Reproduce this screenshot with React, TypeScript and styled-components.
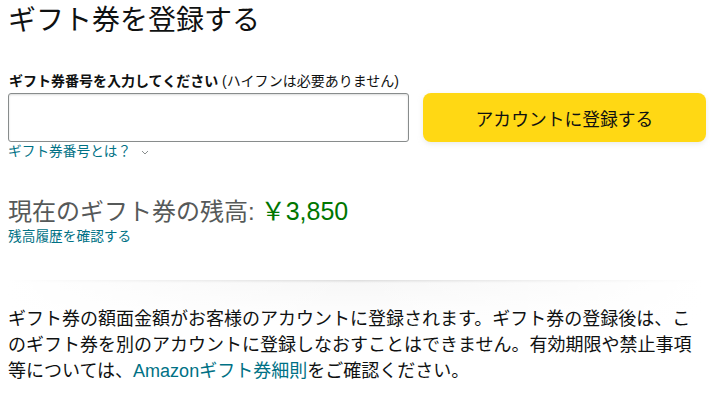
import React from "react";
import styled, { createGlobalStyle } from "styled-components";

const GlobalStyle = createGlobalStyle`
  html, body {
    margin: 0;
    padding: 0;
    background: #fff;
  }
  body {
    font-family: "Liberation Sans", "Noto Sans CJK JP", sans-serif;
    color: #0f1111;
  }
`;

const Page = styled.div`
  width: 710px;
  height: 395px;
  overflow: hidden;
  padding: 3px 8px 0;
  box-sizing: border-box;
`;

const Title = styled.h1`
  margin: 0;
  font-size: 28px;
  font-weight: 400;
  line-height: 36px;
  color: #0f1111;
`;

const Form = styled.div`
  margin-top: 32px;
`;

const Label = styled.label`
  display: block;
  font-size: 14px;
  line-height: 20px;
  margin-bottom: 2px;
  color: #0f1111;
  padding-left: 1px;

  b {
    font-weight: 700;
  }
`;

const InputRow = styled.div`
  display: grid;
  grid-template-columns: 401px 283px;
  gap: 14px;
  align-items: center;
`;

const CodeInput = styled.input`
  height: 49px;
  box-sizing: border-box;
  border: 1px solid #888c8c;
  border-radius: 3px;
  box-shadow: 0 1px 2px rgba(15, 17, 17, 0.15) inset;
  padding: 0 11px;
  font-size: 16px;
  outline: none;
`;

const YellowButton = styled.button`
  height: 49px;
  border: none;
  border-radius: 8px;
  background: #ffd814;
  box-shadow: 0 2px 5px 0 rgba(213, 217, 217, 0.5);
  font-family: inherit;
  font-size: 17.8px;
  color: #0f1111;
  cursor: pointer;
`;

const Link = styled.a`
  color: #007185;
  text-decoration: none;
  cursor: pointer;
`;

const InlineLink = styled(Link)`
  display: inline-block;
  line-height: 26px;
  vertical-align: top;
`;

const HelpLink = styled(Link)`
  display: inline-flex;
  align-items: center;
  gap: 10px;
  margin-top: 1px;
  font-size: 13.7px;
  line-height: 18px;
`;

const Balance = styled.div`
  margin-top: 34px;
  font-size: 24px;
  line-height: 32px;
  color: #565959;
`;

const Amount = styled.span`
  color: #007600;
  margin-left: 6px;
  font-size: 25px;
`;

const HistoryLink = styled(Link)`
  display: block;
  font-size: 13.7px;
  line-height: 18px;
`;

const Divider = styled.div`
  position: relative;
  margin-top: 34px;
  height: 44px;
  margin-bottom: -18px;
  background: linear-gradient(
    to bottom,
    rgba(0, 0, 0, 0.14),
    rgba(0, 0, 0, 0.03) 3px,
    transparent
  );

  &::after {
    content: "";
    display: block;
    width: 100%;
    height: 44px;
    background: linear-gradient(to right, #fff, rgba(255, 255, 255, 0), #fff);
  }
`;

const Note = styled.p`
  position: relative;
  z-index: 1;
  margin: -1px 0 0;
  font-size: 18px;
  line-height: 26px;
  color: #0f1111;
`;

const Chevron = () => (
  <svg width="8" height="5" viewBox="0 0 8 5" fill="none">
    <path d="M1 1l3 3 3-3" stroke="#8a8f8f" strokeWidth="1" />
  </svg>
);

export default function App() {
  return (
    <>
      <GlobalStyle />
      <Page>
        <Title>ギフト券を登録する</Title>
        <Form>
          <Label>
            <b>ギフト券番号を入力してください</b> (ハイフンは必要ありません)
          </Label>
          <InputRow>
            <CodeInput type="text" />
            <YellowButton>アカウントに登録する</YellowButton>
          </InputRow>
          <HelpLink>
            ギフト券番号とは？
            <Chevron />
          </HelpLink>
        </Form>
        <Balance>
          現在のギフト券の残高:<Amount>￥3,850</Amount>
        </Balance>
        <HistoryLink>残高履歴を確認する</HistoryLink>
        <Divider />
        <Note>
          ギフト券の額面金額がお客様のアカウントに登録されます。ギフト券の登録後は、このギフト券を別のアカウントに登録しなおすことはできません。有効期限や禁止事項等については、
          <InlineLink>Amazonギフト券細則</InlineLink>をご確認ください。
        </Note>
      </Page>
    </>
  );
}
